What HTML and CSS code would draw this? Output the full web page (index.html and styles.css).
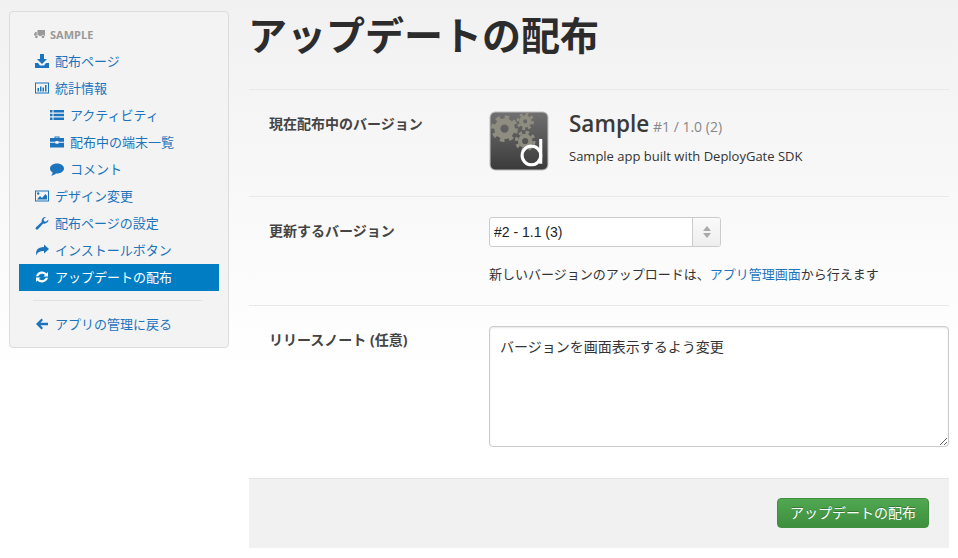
FILE: index.html
```html
<!DOCTYPE html>
<html lang="ja">
<head>
    <meta charset="UTF-8">
    <title>アップデートの配布</title>
    <link rel="stylesheet" href="styles.css">
</head>
<body>

    <nav class="sidebar">
        <div class="nav-header">
            <svg class="nav-icon-small" viewBox="0 0 16 14"><path d="M5 1h11v9h-1a2 2 0 0 0-4 0H7.500a2 2 0 0 0-2.500-1.500zM4 4v5H0V7l2-3z"/><circle cx="3.500" cy="11" r="2"/><circle cx="13" cy="11" r="2"/></svg>
            SAMPLE
        </div>
        <a class="nav-item" href="#"><svg class="nav-icon" viewBox="0 0 14 14"><path d="M5 0h4v5h3L7 10 2 5h3zM0 9h3l2 2.500h4L11 9h3v5H0z"/></svg>配布ページ</a>
        <a class="nav-item" href="#"><svg class="nav-icon" viewBox="0 0 14 14"><path d="M0 1.500h14v11H0zm1 1v9h12v-9zM2.500 7h1.500v3.500H2.500zM5 5.500h1.500v5H5zM7.500 6.500H9v4H7.500zM10 4h1.500v6.500H10z" fill-rule="evenodd"/></svg>統計情報</a>
        <a class="nav-item sub" href="#"><svg class="nav-icon" viewBox="0 0 14 14"><path d="M0 2h2.500v2.500H0zM3.500 2H14v2.500H3.500zM0 5.800h2.500v2.500H0zM3.500 5.800H14v2.500H3.500zM0 9.500h2.500V12H0zM3.500 9.500H14V12H3.500z"/></svg>アクティビティ</a>
        <a class="nav-item sub" href="#"><svg class="nav-icon" viewBox="0 0 14 14"><path d="M4.500 3V1.500h5V3H14v3.800H8.500V6h-3v.8H0V3zm1 0h3v-.6h-3zM0 7.800h5.500v1h3v-1H14V12.500H0z" fill-rule="evenodd"/></svg>配布中の端末一覧</a>
        <a class="nav-item sub" href="#"><svg class="nav-icon" viewBox="0 0 14 14"><path d="M7 1.500c3.900 0 7 2.200 7 5s-3.100 5-7 5h-1C4.500 13 2.500 13.500 1 13.500c1-.8 1.500-1.700 1.600-3C1 9.600 0 8.100 0 6.500c0-2.800 3.100-5 7-5z"/></svg>コメント</a>
        <a class="nav-item" href="#"><svg class="nav-icon" viewBox="0 0 14 14"><path d="M0 1.500h14v11H0zm1 1v9h12v-9zM2 10.500l3-3.500 2 2 3.500-4 1.500 2v3.500zM2 4.500a1.200 1.200 0 1 0 2.400 0 1.200 1.200 0 1 0-2.400 0z" fill-rule="evenodd"/></svg>デザイン変更</a>
        <a class="nav-item" href="#"><svg class="nav-icon" viewBox="0 0 14 14"><path d="M13.500 3.500a4 4 0 0 1-5.300 3.900L3 13.200c-.6.600-1.500.600-2 0s-.6-1.500 0-2l5.700-5.300A4 4 0 0 1 11 1L8.500 3.300l.5 2 2 .5z"/></svg>配布ページの設定</a>
        <a class="nav-item" href="#"><svg class="nav-icon" viewBox="0 0 14 14"><path d="M9 1.500l5 4.500-5 4.500V8C5 8 2.500 9 1.500 12.500 0 8 2.500 4 9 4z"/></svg>インストールボタン</a>
        <a class="nav-item active" href="#"><svg class="nav-icon" viewBox="0 0 14 14"><path d="M7 1.500c2 0 3.600 1 4.500 2L13 2v4.500H8.500l1.500-1.500C9.300 4.300 8.300 3.800 7 3.800 5.300 3.800 4 4.800 3.400 6.200H1C1.700 3.500 4.100 1.500 7 1.500zM1 7.500h4.500L4 9c.7.700 1.700 1.200 3 1.200 1.700 0 3-1 3.600-2.400H13c-.7 2.700-3.100 4.700-6 4.700-2 0-3.600-1-4.500-2L1 12z"/></svg>アップデートの配布</a>
        <hr class="nav-divider">
        <a class="nav-item" href="#"><svg class="nav-icon" viewBox="0 0 14 14"><path d="M6.500 1.500L8 3 5.500 5.700H13v2.600H5.500L8 11l-1.500 1.500L1 7z"/></svg>アプリの管理に戻る</a>
    </nav>

    <main class="content">
        <h1>アップデートの配布</h1>

        <form>
            <div class="form-row current-row">
                <div class="form-label">現在配布中のバージョン</div>
                <div class="app-info">
                    <svg class="app-icon" viewBox="0 0 58 58">
                        <defs>
                            <linearGradient id="iconBg" x1="0" y1="0" x2="0" y2="1">
                                <stop offset="0" stop-color="#707070"/>
                                <stop offset="1" stop-color="#3a3a3a"/>
                            </linearGradient>
                        </defs>
                        <rect x="1" y="1" width="56" height="56" rx="5" fill="url(#iconBg)" stroke="#bbb"/>
                        <g fill="none" stroke="#8f8d80">
                            <circle cx="15" cy="17" r="7" stroke-width="6"/>
                            <circle cx="15" cy="17" r="11" stroke-width="4" stroke-dasharray="4.300 4.300"/>
                            <circle cx="35" cy="10" r="4" stroke-width="4"/>
                            <circle cx="35" cy="10" r="7" stroke-width="3" stroke-dasharray="2.700 2.800"/>
                            <circle cx="35" cy="29" r="5" stroke-width="4"/>
                            <circle cx="35" cy="29" r="8.500" stroke-width="3" stroke-dasharray="3.300 3.400"/>
                        </g>
                        <g fill="none" stroke="#fff" stroke-width="3">
                            <circle cx="41" cy="43" r="9"/>
                            <path d="M50 27v24"/>
                        </g>
                    </svg>
                    <div>
                        <div class="app-title">Sample <small>#1 / 1.0 (2)</small></div>
                        <div class="app-desc">Sample app built with DeployGate SDK</div>
                    </div>
                </div>
            </div>

            <div class="form-row version-row">
                <div class="form-label">更新するバージョン</div>
                <div>
                    <div class="select-box">
                        <select>
                            <option>#2 - 1.1 (3)</option>
                        </select>
                        <span class="select-arrows"><i class="arrow-up"></i><i class="arrow-down"></i></span>
                    </div>
                    <p class="help-text">新しいバージョンのアップロードは、<a href="#">アプリ管理画面</a>から行えます</p>
                </div>
            </div>

            <div class="form-row notes-row">
                <div class="form-label">リリースノート (任意)</div>
                <textarea>バージョンを画面表示するよう変更</textarea>
            </div>

            <div class="form-actions">
                <button type="button">アップデートの配布</button>
            </div>
        </form>
    </main>

</body>
</html>
```

FILE: styles.css
```css
html {
    height: 100%;
}
body {
    margin: 0;
    padding: 11px 9px 10px;
    display: flex;
    align-items: flex-start;
    gap: 20px;
    font-family: "Open Sans", "Noto Sans CJK JP", sans-serif;
    font-size: 13px;
    color: #333;
    background: linear-gradient(#f1f1f1, #fff 370px) no-repeat;
}
a {
    color: #1c75bc;
    text-decoration: none;
}
.sidebar {
    width: 220px;
    box-sizing: border-box;
    height: 337px;
    padding: 9px 9px 0;
    background-color: #f3f3f3;
    border: 1px solid #dcdcdc;
    border-radius: 4px;
}
.nav-header {
    display: flex;
    align-items: center;
    gap: 5px;
    height: 27px;
    padding-bottom: 1px;
    box-sizing: border-box;
    padding-left: 15px;
    font-size: 11px;
    font-weight: 700;
    color: #999;
}
.nav-icon-small {
    width: 11px;
    height: 10px;
    fill: #999;
}
.nav-item {
    display: flex;
    align-items: center;
    gap: 6px;
    height: 27px;
    box-sizing: border-box;
    padding-left: 16px;
    padding-bottom: 2px;
}
.nav-item.sub {
    padding-left: 31px;
}
.nav-icon {
    width: 14px;
    height: 14px;
    flex: none;
    fill: #1c75bc;
}
.nav-item.active {
    background-color: #007dc3;
    color: #fff;
}
.nav-item.active .nav-icon {
    fill: #fff;
}
.nav-divider {
    height: 1px;
    margin: 9px 17px 10px 14px;
    border: none;
    background-color: #e2e2e2;
}
.content {
    width: 700px;
}
h1 {
    margin: 0 0 0 -1px;
    height: 78px;
    font-size: 39px;
    line-height: 48px;
    font-weight: 700;
    color: #2c2c2c;
}
.form-row {
    display: grid;
    grid-template-columns: 220px 1fr;
    padding-left: 20px;
    box-sizing: border-box;
    border-top: 1px solid #e8e8e8;
}
.form-label {
    font-size: 14px;
    font-weight: 700;
    line-height: 20px;
    color: #444;
}
.current-row {
    height: 107px;
    padding-top: 24px;
}
.app-info {
    display: flex;
    gap: 20px;
    margin-top: -3px;
}
.app-icon {
    width: 60px;
    height: 60px;
    flex: none;
}
.app-title {
    margin-top: -2px;
    font-size: 22.5px;
    line-height: 30px;
    font-weight: 600;
    color: #3a3a3a;
}
.app-title small {
    margin-left: -2px;
    font-size: 14px;
    font-weight: 400;
    color: #888;
}
.app-desc {
    margin-top: 5px;
    font-size: 13px;
    line-height: 18px;
}
.version-row {
    height: 109px;
    padding-top: 20px;
}
.version-row .form-label {
    padding-top: 4px;
}
.select-box {
    display: flex;
    width: 232px;
    height: 30px;
    box-sizing: border-box;
    background-color: #fff;
    border: 1px solid #ccc;
    border-radius: 3px;
}
.select-box select {
    flex: 1;
    min-width: 0;
    padding: 0 4px;
    border: none;
    outline: none;
    appearance: none;
    background: transparent;
    font-family: "Liberation Sans", sans-serif;
    font-size: 14px;
    color: #222;
}
.select-arrows {
    display: flex;
    flex-direction: column;
    align-items: center;
    justify-content: center;
    gap: 2px;
    width: 27px;
    border-left: 1px solid #ccc;
    border-radius: 0 2px 2px 0;
    background: linear-gradient(#fafafa, #eee);
}
.arrow-up, .arrow-down {
    width: 0;
    height: 0;
    border-left: 4px solid transparent;
    border-right: 4px solid transparent;
}
.arrow-up {
    border-bottom: 5px solid #aaa;
}
.arrow-down {
    border-top: 5px solid #aaa;
}
.help-text {
    margin: 17px 0 0;
    font-size: 13px;
    line-height: 20px;
}
.notes-row {
    height: 173px;
    padding-top: 20px;
}
.notes-row .form-label {
    padding-top: 4px;
}
textarea {
    width: 460px;
    height: 121px;
    box-sizing: border-box;
    padding: 10px;
    background-color: #fff;
    border: 1px solid #ccc;
    border-radius: 4px;
    box-shadow: inset 0 1px 2px rgba(0, 0, 0, 0.1);
    font-family: "Open Sans", "Noto Sans CJK JP", sans-serif;
    font-size: 14px;
    line-height: 20px;
    color: #333;
    outline: none;
}
.form-actions {
    display: flex;
    justify-content: flex-end;
    height: 70px;
    box-sizing: border-box;
    padding: 19px 20px 0 0;
    background-color: #f1f1f1;
    border-top: 1px solid #e3e3e3;
}
button {
    width: 152px;
    height: 30px;
    padding: 0 0 3px;
    background: linear-gradient(#51a851, #3d8e3d);
    border: 1px solid #3f8f3f;
    border-radius: 4px;
    color: #fff;
    font-family: "Open Sans", "Noto Sans CJK JP", sans-serif;
    font-size: 14px;
    text-shadow: 0 -1px 0 rgba(0, 0, 0, 0.25);
    cursor: pointer;
}
```
